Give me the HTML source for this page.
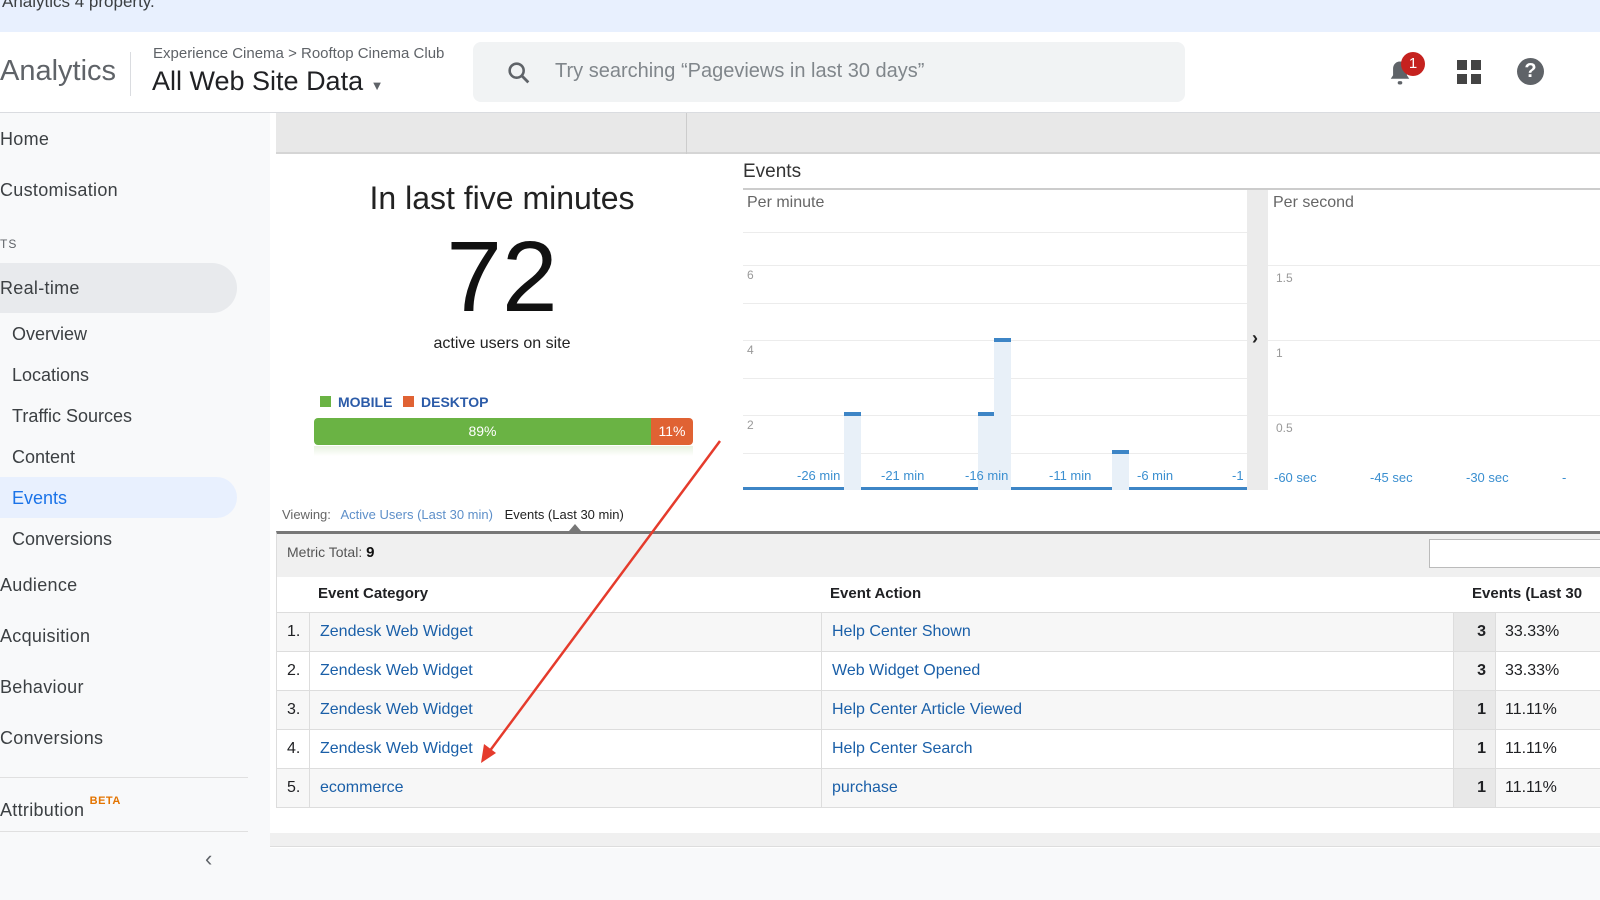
<!DOCTYPE html>
<html><head><meta charset="utf-8"><style>
*{margin:0;padding:0;box-sizing:border-box}
body{width:1600px;height:900px;overflow:hidden;position:relative;font-family:"Liberation Sans",sans-serif;background:#fff;color:#202124}
.a{position:absolute;white-space:nowrap}
.nav{font-size:18px;color:#3c4043;letter-spacing:.3px}
.sub{font-size:18px;color:#3c4043;left:12px}
.lnk{color:#1a5fa8}
.gl{position:absolute;height:1px;background:#ececec}
.tl{color:#3b8fd0;font-size:13px}
.row{position:absolute;left:276px;width:1324px;height:39px;border-bottom:1px solid #ddd;font-size:16px}
.row div{position:absolute;top:0;height:38px;line-height:38px}
</style></head><body>
<div class="a" style="left:0;top:0;width:1600px;height:32px;background:#e8f0fe"></div>
<div class="a" style="left:2px;top:-8px;font-size:17px;color:#3c4043">Analytics 4 property.</div>
<div class="a" style="left:0;top:112px;width:1600px;height:1px;background:#dadce0"></div>
<div class="a" style="left:0;top:55px;font-size:29px;color:#5f6368">Analytics</div>
<div class="a" style="left:130px;top:52px;width:1px;height:44px;background:#dadce0"></div>
<div class="a" style="left:153px;top:45px;font-size:15px;color:#5f6368">Experience Cinema &gt; Rooftop Cinema Club</div>
<div class="a" style="left:152px;top:66px;font-size:27px;color:#202124">All Web Site Data <span style="font-size:13px;color:#5f6368">▼</span></div>
<div class="a" style="left:473px;top:42px;width:712px;height:60px;background:#f1f3f4;border-radius:8px"></div>
<svg class="a" style="left:505px;top:59px" width="28" height="28" viewBox="0 0 24 24"><circle cx="10" cy="10" r="6" fill="none" stroke="#5f6368" stroke-width="2.2"/><path d="M14.5 14.5L20 20" stroke="#5f6368" stroke-width="2.4"/></svg>
<div class="a" style="left:555px;top:60px;font-size:20px;color:#80868b">Try searching “Pageviews in last 30 days”</div>
<svg class="a" style="left:1386px;top:58px" width="28" height="30" viewBox="0 0 24 26"><path d="M12 3a6 6 0 0 0-6 6v6l-2 3h16l-2-3V9a6 6 0 0 0-6-6z" fill="#5f6368"/><rect x="10" y="20" width="4" height="3" rx="1.5" fill="#5f6368"/></svg>
<div class="a" style="left:1401px;top:52px;width:24px;height:24px;border-radius:50%;background:#c5221f;color:#fff;font-size:15px;text-align:center;line-height:24px">1</div>
<svg class="a" style="left:1457px;top:60px" width="25" height="25"><rect x="0" y="0" width="10" height="10" fill="#444"/><rect x="14" y="0" width="10" height="10" fill="#444"/><rect x="0" y="14" width="10" height="10" fill="#444"/><rect x="14" y="14" width="10" height="10" fill="#444"/></svg>
<div class="a" style="left:1517px;top:58px;width:27px;height:27px;border-radius:50%;background:#5f6368;color:#fff;font-weight:bold;font-size:20px;text-align:center;line-height:27px">?</div>

<!-- sidebar -->
<div class="a" style="left:0;top:113px;width:270px;height:787px;background:#f8f9fa"></div>
<div class="a nav" style="left:0;top:129px">Home</div>
<div class="a nav" style="left:0;top:180px">Customisation</div>
<div class="a" style="left:0;top:237px;font-size:12px;color:#5f6368;letter-spacing:1px">TS</div>
<div class="a" style="left:0;top:263px;width:237px;height:50px;background:#e8eaed;border-radius:0 25px 25px 0"></div>
<div class="a nav" style="left:0;top:278px">Real-time</div>
<div class="a sub" style="top:324px">Overview</div>
<div class="a sub" style="top:365px">Locations</div>
<div class="a sub" style="top:406px">Traffic Sources</div>
<div class="a sub" style="top:447px">Content</div>
<div class="a" style="left:0;top:477px;width:237px;height:41px;background:#e8f0fe;border-radius:0 21px 21px 0"></div>
<div class="a sub" style="top:488px;color:#1a73e8">Events</div>
<div class="a sub" style="top:529px">Conversions</div>
<div class="a nav" style="left:0;top:575px">Audience</div>
<div class="a nav" style="left:0;top:626px">Acquisition</div>
<div class="a nav" style="left:0;top:677px">Behaviour</div>
<div class="a nav" style="left:0;top:728px">Conversions</div>
<div class="a" style="left:0;top:777px;width:248px;height:1px;background:#e0e0e0"></div>
<div class="a nav" style="left:0;top:795px">Attribution <sup style="font-size:11px;color:#e37400;font-weight:bold;letter-spacing:.5px;vertical-align:12px">BETA</sup></div>
<div class="a" style="left:0;top:831px;width:248px;height:1px;background:#e0e0e0"></div>
<div class="a" style="left:205px;top:846px;font-size:22px;color:#5f6368">‹</div>

<!-- top grey bar -->
<div class="a" style="left:276px;top:113px;width:1324px;height:41px;background:#e8e8e8;border-bottom:2px solid #d5d5d5"></div>
<div class="a" style="left:686px;top:113px;width:1px;height:41px;background:#ccc"></div>

<!-- left summary -->
<div class="a" style="left:276px;top:180px;width:452px;text-align:center;font-size:32px;color:#222">In last five minutes</div>
<div class="a" style="left:276px;top:222px;width:452px;text-align:center;font-size:100px;color:#111;line-height:110px">72</div>
<div class="a" style="left:276px;top:335px;width:452px;text-align:center;font-size:16px;color:#222">active users on site</div>
<div class="a" style="left:320px;top:396px;width:11px;height:11px;background:#6ab344"></div>
<div class="a" style="left:338px;top:394px;font-size:14px;font-weight:bold;color:#2b5ba8">MOBILE</div>
<div class="a" style="left:403px;top:396px;width:11px;height:11px;background:#e06233"></div>
<div class="a" style="left:421px;top:394px;font-size:14px;font-weight:bold;color:#2b5ba8">DESKTOP</div>
<div class="a" style="left:314px;top:418px;width:337px;height:27px;background:#6ab344;border-radius:4px 0 0 4px;color:#fff;font-size:14px;text-align:center;line-height:27px">89%</div>
<div class="a" style="left:651px;top:418px;width:42px;height:27px;background:#e06233;border-radius:0 4px 4px 0;color:#fff;font-size:14px;text-align:center;line-height:27px">11%</div>
<div class="a" style="left:314px;top:446px;width:379px;height:10px;background:linear-gradient(#e8f2e0,#fff)"></div>

<!-- chart -->
<div class="a" style="left:743px;top:161px;font-size:19px;color:#333">Events</div>
<div class="a" style="left:743px;top:188px;width:857px;height:2px;background:#ccc"></div>
<div class="a" style="left:747px;top:194px;font-size:16px;color:#666">Per minute</div>
<div class="a" style="left:1273px;top:194px;font-size:16px;color:#666">Per second</div>
<div class="gl" style="left:743px;width:504px;top:232px"></div>
<div class="gl" style="left:743px;width:857px;top:265px"></div>
<div class="gl" style="left:743px;width:504px;top:303px"></div>
<div class="gl" style="left:743px;width:857px;top:340px"></div>
<div class="gl" style="left:743px;width:504px;top:378px"></div>
<div class="gl" style="left:743px;width:857px;top:415px"></div>
<div class="gl" style="left:743px;width:504px;top:453px"></div>
<div class="a" style="left:747px;top:268px;font-size:12px;color:#999">6</div>
<div class="a" style="left:747px;top:343px;font-size:12px;color:#999">4</div>
<div class="a" style="left:747px;top:418px;font-size:12px;color:#999">2</div>
<div class="a" style="left:1276px;top:271px;font-size:12px;color:#999">1.5</div>
<div class="a" style="left:1276px;top:346px;font-size:12px;color:#999">1</div>
<div class="a" style="left:1276px;top:421px;font-size:12px;color:#999">0.5</div>
<div class="a" style="left:1247px;top:190px;width:21px;height:300px;background:#ebebeb"></div>
<div class="a" style="left:1252px;top:328px;font-size:18px;font-weight:bold;color:#222">›</div>
<div class="a" style="left:844px;top:412px;width:17px;height:78px;background:#e8f0f8;border-top:4px solid #3d85c6"></div>
<div class="a" style="left:978px;top:412px;width:17px;height:78px;background:#e8f0f8;border-top:4px solid #3d85c6"></div>
<div class="a" style="left:994px;top:338px;width:17px;height:152px;background:#e8f0f8;border-top:4px solid #3d85c6"></div>
<div class="a" style="left:1112px;top:450px;width:17px;height:40px;background:#e8f0f8;border-top:4px solid #3d85c6"></div>
<div class="a" style="left:743px;top:487px;width:101px;height:3px;background:#3d85c6"></div>
<div class="a" style="left:861px;top:487px;width:117px;height:3px;background:#3d85c6"></div>
<div class="a" style="left:1011px;top:487px;width:101px;height:3px;background:#3d85c6"></div>
<div class="a" style="left:1129px;top:487px;width:118px;height:3px;background:#3d85c6"></div>
<div class="a tl" style="left:797px;top:468px">-26 min</div>
<div class="a tl" style="left:881px;top:468px">-21 min</div>
<div class="a tl" style="left:965px;top:468px">-16 min</div>
<div class="a tl" style="left:1049px;top:468px">-11 min</div>
<div class="a tl" style="left:1137px;top:468px">-6 min</div>
<div class="a tl" style="left:1232px;top:468px">-1</div>
<div class="a tl" style="left:1274px;top:470px">-60 sec</div>
<div class="a tl" style="left:1370px;top:470px">-45 sec</div>
<div class="a tl" style="left:1466px;top:470px">-30 sec</div>
<div class="a tl" style="left:1562px;top:470px">-</div>

<!-- viewing -->
<div class="a" style="left:282px;top:507px;font-size:13px;color:#666">Viewing: <span style="color:#5d8fc9;margin-left:6px">Active Users (Last 30 min)</span> <span style="color:#222;margin-left:8px">Events (Last 30 min)</span></div>
<div class="a" style="left:569px;top:524px;width:0;height:0;border-left:6px solid transparent;border-right:6px solid transparent;border-bottom:7px solid #777"></div>
<div class="a" style="left:276px;top:531px;width:1324px;height:46px;background:#f0f0f0;border-top:3px solid #777;border-left:1px solid #ddd"></div>
<div class="a" style="left:287px;top:544px;font-size:14px;color:#555">Metric Total: <b style="color:#111;font-size:15px">9</b></div>
<div class="a" style="left:1429px;top:539px;width:180px;height:29px;background:#fff;border:1px solid #bbb"></div>

<!-- table -->
<div class="row" style="top:577px;height:36px;background:#fff;border-left:1px solid #ddd"><div style="left:41px;font-weight:bold;font-size:15px;line-height:34px">Event Category</div><div style="left:553px;font-weight:bold;font-size:15px;line-height:34px">Event Action</div><div style="left:1195px;font-weight:bold;font-size:15px;line-height:34px">Events (Last 30 min)</div></div>
<div class="a" style="left:276px;top:612px;width:1324px;height:2px;background:#ddd"></div>

<div class="row" style="top:613px;background:#f7f7f7;border-left:1px solid #ddd"><div style="left:10px">1.</div><div style="left:43px" class="lnk">Zendesk Web Widget</div><div style="left:555px" class="lnk">Help Center Shown</div><div style="left:1177px;width:42px;background:#e8e8e8;text-align:right;padding-right:10px;font-weight:bold">3</div><div style="left:1228px">33.33%</div></div>
<div class="row" style="top:652px;background:#fff;border-left:1px solid #ddd"><div style="left:10px">2.</div><div style="left:43px" class="lnk">Zendesk Web Widget</div><div style="left:555px" class="lnk">Web Widget Opened</div><div style="left:1177px;width:42px;background:#f0f0f0;text-align:right;padding-right:10px;font-weight:bold">3</div><div style="left:1228px">33.33%</div></div>
<div class="row" style="top:691px;background:#f7f7f7;border-left:1px solid #ddd"><div style="left:10px">3.</div><div style="left:43px" class="lnk">Zendesk Web Widget</div><div style="left:555px" class="lnk">Help Center Article Viewed</div><div style="left:1177px;width:42px;background:#e8e8e8;text-align:right;padding-right:10px;font-weight:bold">1</div><div style="left:1228px">11.11%</div></div>
<div class="row" style="top:730px;background:#fff;border-left:1px solid #ddd"><div style="left:10px">4.</div><div style="left:43px" class="lnk">Zendesk Web Widget</div><div style="left:555px" class="lnk">Help Center Search</div><div style="left:1177px;width:42px;background:#f0f0f0;text-align:right;padding-right:10px;font-weight:bold">1</div><div style="left:1228px">11.11%</div></div>
<div class="row" style="top:769px;background:#f7f7f7;border-left:1px solid #ddd"><div style="left:10px">5.</div><div style="left:43px" class="lnk">ecommerce</div><div style="left:555px" class="lnk">purchase</div><div style="left:1177px;width:42px;background:#e8e8e8;text-align:right;padding-right:10px;font-weight:bold">1</div><div style="left:1228px">11.11%</div></div>
<div class="a" style="left:309px;top:613px;width:1px;height:194px;background:#ddd"></div>
<div class="a" style="left:821px;top:613px;width:1px;height:194px;background:#ddd"></div>
<div class="a" style="left:1453px;top:613px;width:1px;height:194px;background:#ddd"></div>
<div class="a" style="left:1495px;top:613px;width:1px;height:194px;background:#ddd"></div>

<div class="a" style="left:270px;top:833px;width:1330px;height:14px;background:#f0f0f0;border-bottom:1px solid #ddd"></div>
<div class="a" style="left:270px;top:848px;width:1330px;height:52px;background:#f8f9fa"></div>

<svg class="a" style="left:0;top:0" width="1600" height="900"><line x1="720" y1="441" x2="489" y2="752" stroke="#e53b2c" stroke-width="2.5"/><path d="M481 763 L484 744 L496 753 Z" fill="#e53b2c"/></svg>
</body></html>
